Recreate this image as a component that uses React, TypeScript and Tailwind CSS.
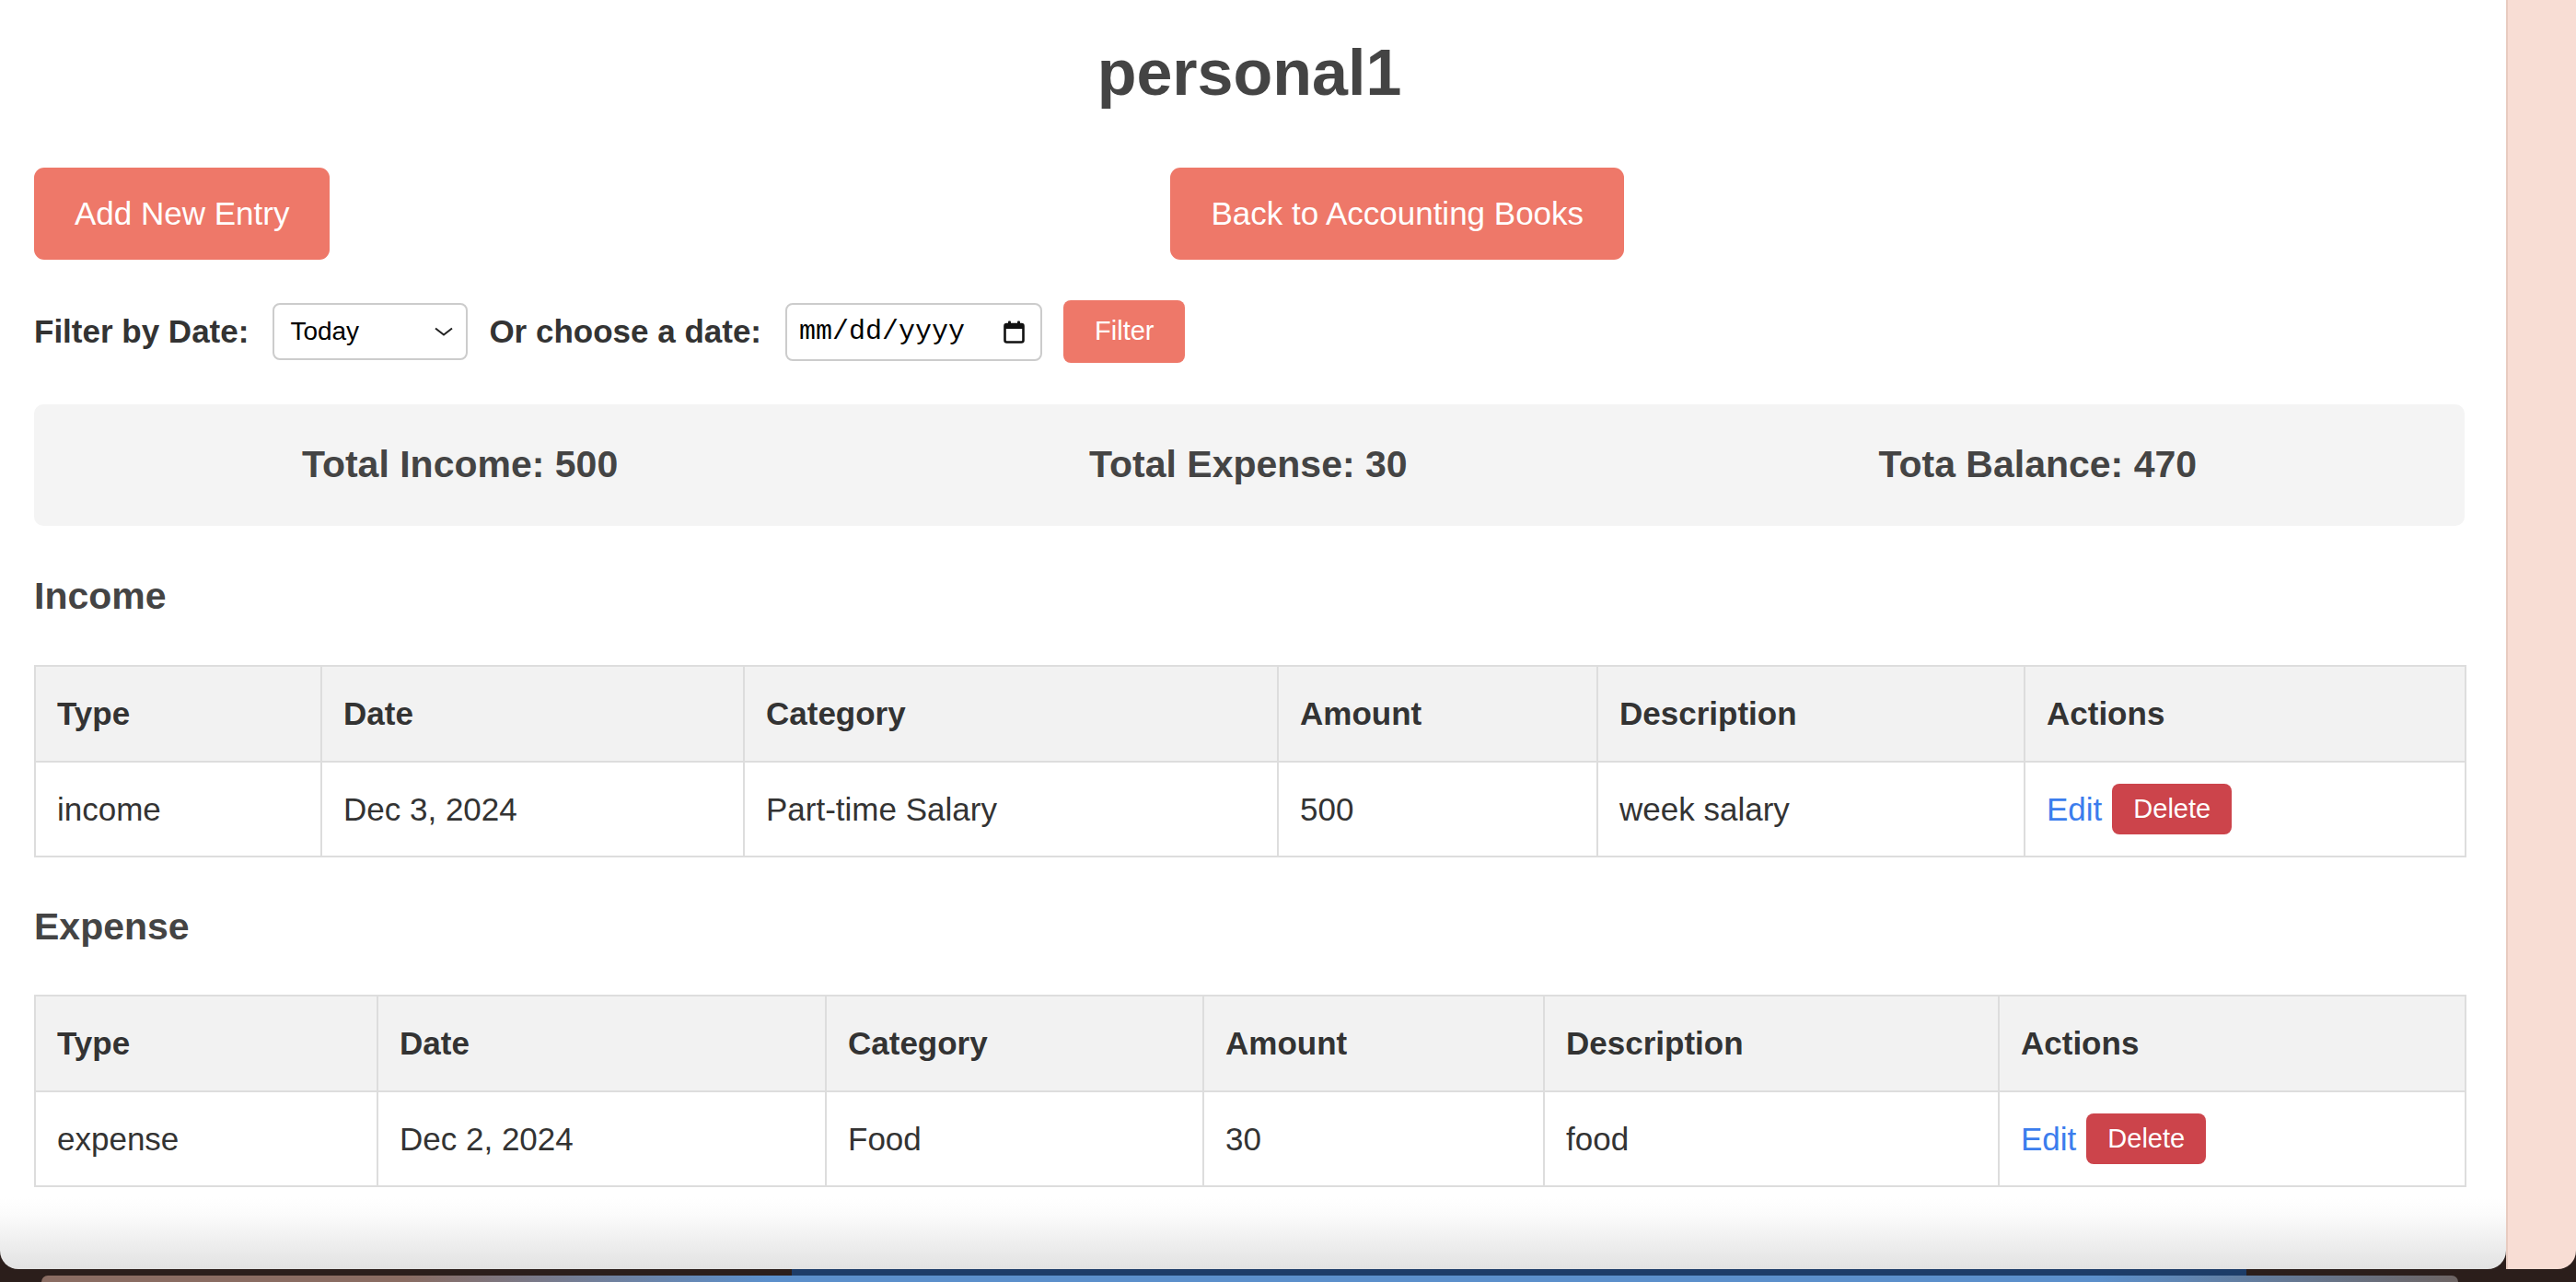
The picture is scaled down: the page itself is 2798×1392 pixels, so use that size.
import React from 'react';

interface Entry {
    id: number;
    type: string;
    date: string;
    category: string;
    amount: number;
    description: string;
}

interface EntryTableProps {
    entries: Entry[];
    colWidths: string[];
}

const incomeEntries: Entry[] = [
    { id: 1, type: 'income', date: 'Dec 3, 2024', category: 'Part-time Salary', amount: 500, description: 'week salary' },
];

const expenseEntries: Entry[] = [
    { id: 2, type: 'expense', date: 'Dec 2, 2024', category: 'Food', amount: 30, description: 'food' },
];

const headers = ['Type', 'Date', 'Category', 'Amount', 'Description', 'Actions'];

const cell = 'border-2 border-[#ddd] px-[23px] text-left align-middle';

const EntryTable: React.FC<EntryTableProps> = ({ entries, colWidths }) => {
    return (
        <table className="w-[2640px] table-fixed border-collapse text-[35px] leading-[40px] text-[#333]">
            <colgroup>
                {colWidths.map((w, i) => (
                    <col key={i} className={w} />
                ))}
            </colgroup>
            <thead>
                <tr className="h-[104px] bg-[#f2f2f2]">
                    {headers.map((h) => (
                        <th key={h} className={`${cell} font-bold`}>
                            {h}
                        </th>
                    ))}
                </tr>
            </thead>
            <tbody>
                {entries.map((entry) => (
                    <tr key={entry.id} className="h-[103px]">
                        <td className={cell}>{entry.type}</td>
                        <td className={cell}>{entry.date}</td>
                        <td className={cell}>{entry.category}</td>
                        <td className={cell}>{entry.amount}</td>
                        <td className={cell}>{entry.description}</td>
                        <td className={cell}>
                            <div className="flex items-center gap-[11px]">
                                <a href="#" className="text-[#3b7ded]">Edit</a>
                                <button className="h-[55px] rounded-[8px] bg-[#cc444b] px-[23px] text-[29px] leading-[33px] text-white">
                                    Delete
                                </button>
                            </div>
                        </td>
                    </tr>
                ))}
            </tbody>
        </table>
    );
};

const CalendarIcon: React.FC = () => (
    <svg width="23" height="25" viewBox="0 0 23 25" fill="none">
        <rect x="1.5" y="4" width="20" height="19.5" rx="2" stroke="#111" strokeWidth="2.6" />
        <rect x="1.5" y="4" width="20" height="5" fill="#111" />
        <rect x="5" y="0.5" width="3" height="5" rx="1" fill="#111" />
        <rect x="15" y="0.5" width="3" height="5" rx="1" fill="#111" />
    </svg>
);

const App: React.FC = () => {
    return (
        <div className="flex h-[1392px] w-[2798px] flex-col overflow-hidden bg-[#2b1e1b] font-['Liberation_Sans',Arial,sans-serif]">
            <div className="flex h-[1378px]">
                <div className="flex w-[2722px] flex-col rounded-b-[20px] bg-[linear-gradient(180deg,#ffffff_0px,#ffffff_1300px,#fbfbfb_1320px,#e2e2e2_100%)] pl-[37px] pr-[45px]">
                    <h1 className="mt-[39px] text-center text-[70px] font-bold leading-[80px] text-[#444]">personal1</h1>

                    <div className="mt-[63px] flex justify-between">
                        <button className="h-[100px] rounded-[11px] bg-[#ee7869] px-[44px] text-[35px] leading-[40px] text-white">
                            Add New Entry
                        </button>
                        <button className="h-[100px] rounded-[11px] bg-[#ee7869] px-[44px] text-[35px] leading-[40px] text-white">
                            Back to Accounting Books
                        </button>
                        <div />
                    </div>

                    <div className="mt-[44px] flex h-[68px] items-center">
                        <label className="text-[35px] font-bold leading-[40px] text-[#333]">Filter by Date:</label>
                        <div className="ml-[26px] flex h-[62px] w-[212px] items-center justify-between rounded-[8px] border-2 border-[#ccc] bg-white pl-[17px] pr-[14px] text-[28px] text-black">
                            <span>Today</span>
                            <svg width="20" height="10" viewBox="0 0 20 10" fill="none">
                                <polyline points="1,1.5 10,8.5 19,1.5" stroke="#222" strokeWidth="2" />
                            </svg>
                        </div>
                        <label className="ml-[23px] text-[35px] font-bold leading-[40px] text-[#333]">Or choose a date:</label>
                        <div className="ml-[26px] flex h-[63px] w-[279px] items-center justify-between rounded-[8px] border-2 border-[#ccc] bg-white pl-[13px] pr-[17px]">
                            <span className="font-['Liberation_Mono',monospace] text-[30px] text-black">mm/dd/yyyy</span>
                            <CalendarIcon />
                        </div>
                        <button className="ml-[23px] h-[68px] rounded-[8px] bg-[#ee7869] px-[34px] text-[29px] text-white">
                            Filter
                        </button>
                    </div>

                    <div className="mt-[45px] flex h-[132px] items-center justify-around rounded-[10px] bg-[#f4f4f4] px-[35px] text-[41px] font-bold text-[#444]">
                        <span>Total Income: 500</span>
                        <span>Total Expense: 30</span>
                        <span>Tota Balance: 470</span>
                    </div>

                    <h3 className="mt-[53px] text-[41px] font-bold leading-[46px] text-[#444]">Income</h3>
                    <div className="mt-[52px]">
                        <EntryTable
                            entries={incomeEntries}
                            colWidths={['w-[311px]', 'w-[459px]', 'w-[580px]', 'w-[347px]', 'w-[464px]', 'w-[479px]']}
                        />
                    </div>

                    <h3 className="mt-[52px] text-[41px] font-bold leading-[46px] text-[#444]">Expense</h3>
                    <div className="mt-[51px]">
                        <EntryTable
                            entries={expenseEntries}
                            colWidths={['w-[372px]', 'w-[487px]', 'w-[410px]', 'w-[370px]', 'w-[494px]', 'w-[507px]']}
                        />
                    </div>
                </div>
                <div className="flex-1 rounded-br-[20px] border-l-2 border-[#e8cbc0] bg-[#f8ddd4]" />
            </div>

            <div className="flex h-[14px] flex-col">
                <div className="flex h-[7px]">
                    <div className="ml-[860px] w-[1580px] bg-[#1d3c68]" />
                </div>
                <div className="ml-[45px] h-[7px] w-[2625px] rounded-t-[10px] bg-[linear-gradient(90deg,#8a6c62,#8a6c62_15%,#5b8fcb_30%,#5b8fcb_85%,#6d6463)]" />
            </div>
        </div>
    );
};

export default App;
